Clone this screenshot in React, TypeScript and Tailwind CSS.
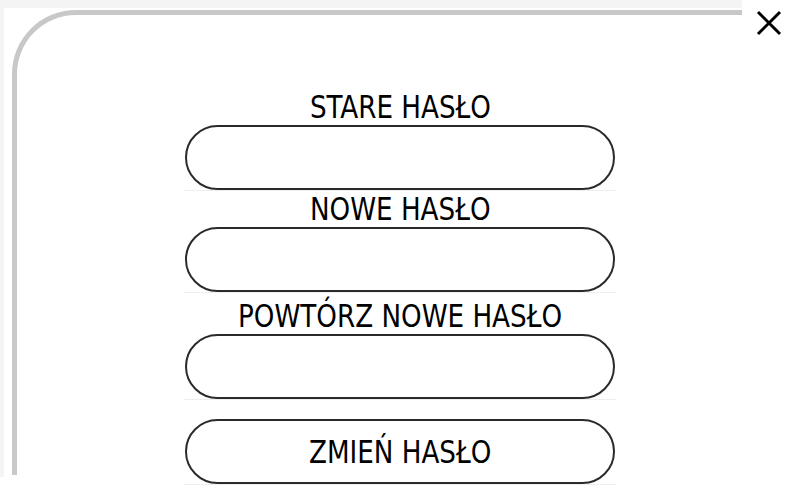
import React from "react";

function Field() {
  return (
    <div className="flex flex-col items-center">
      <div className="w-[430px] h-[65px] rounded-full border-[2.5px] border-[#2a2a2a] bg-white" />
      <div className="w-[432px] h-px bg-[#eeeeee]" />
    </div>
  );
}

function Label({ children, className = "" }: { children: React.ReactNode; className?: string }) {
  return (
    <div className={"h-8 text-[32px] leading-8 text-black text-center whitespace-nowrap scale-x-[0.91] " + className}>
      {children}
    </div>
  );
}

export default function App() {
  return (
    <div className="relative w-[800px] h-[500px] bg-white overflow-hidden grid font-['DejaVu_Sans_Condensed','Liberation_Sans_Narrow',sans-serif]">
      {/* decorative frame */}
      <div className="col-start-1 row-start-1 w-[742px] h-[477px] bg-[#f4f4f4] pl-[4px] pt-[8px]">
        <div className="w-full h-full bg-white pl-[8px] pt-[2px] pb-[2px]">
          <div className="w-full h-full border-l-[5px] border-t-[5px] border-[#c8c8c8] rounded-tl-[64px]" />
        </div>
      </div>

      {/* form */}
      <div className="col-start-1 row-start-1 flex flex-col items-center pt-[91px]">
        <Label>STARE HASŁO</Label>
        <div className="mt-[2px]">
          <Field />
        </div>
        <Label className="mt-[2px]">NOWE HASŁO</Label>
        <div className="mt-[2px]">
          <Field />
        </div>
        <Label className="mt-[7px]">POWTÓRZ NOWE HASŁO</Label>
        <div className="mt-[2px]">
          <Field />
        </div>
        <div className="mt-[19px] flex flex-col items-center">
          <button className="w-[430px] h-[65px] rounded-full border-[2.5px] border-[#2a2a2a] bg-white text-[32px] leading-8 text-black">
            <span className="inline-block scale-x-[0.91]">ZMIEŃ HASŁO</span>
          </button>
          <div className="w-[432px] h-px bg-[#eeeeee]" />
        </div>
      </div>

      {/* close */}
      <button className="absolute left-[755px] top-[9px] w-[28px] h-[28px]" aria-label="close">
        <svg width="28" height="28" viewBox="0 0 28 28">
          <path d="M3 3 L25 25 M25 3 L3 25" stroke="#000" strokeWidth="3" fill="none" />
        </svg>
      </button>
    </div>
  );
}
